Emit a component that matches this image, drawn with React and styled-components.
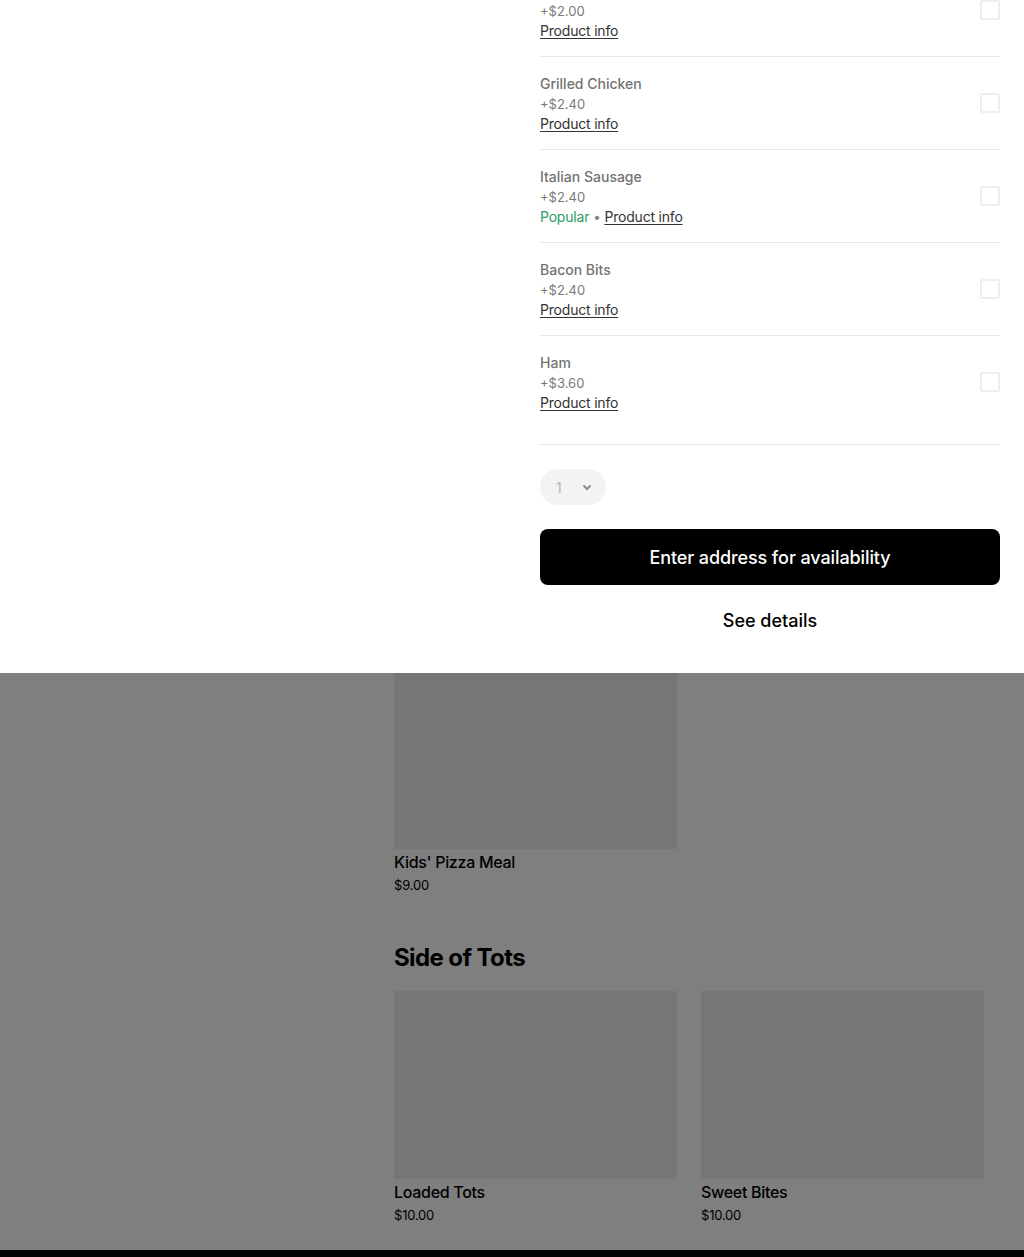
import styled, { createGlobalStyle } from 'styled-components';

const GlobalStyle = createGlobalStyle`
  * { box-sizing: border-box; }
  body {
    margin: 0;
    background: #ffffff;
    font-family: Inter, "Noto Sans", "Liberation Sans", sans-serif;
    color: #000;
  }
`;

const Screen = styled.div`
  height: 1257px;
  overflow: hidden;
  display: flex;
  flex-direction: column;
`;

const Sheet = styled.section`
  background: #fff;
  display: grid;
  grid-template-columns: 516px 460px;
  column-gap: 24px;
  flex-shrink: 0;
`;

const Options = styled.div`
  grid-column: 2;
  margin-top: -36px;
  display: flex;
  flex-direction: column;
`;

const OptionRow = styled.label`
  display: flex;
  align-items: center;
  justify-content: space-between;
  padding: 17px 0 ${(p) => (p.$last ? '31px' : '15px')};
  border-bottom: 1px solid #e8e8e8;
`;

const OptionText = styled.div`
  display: flex;
  flex-direction: column;
`;

const OptionName = styled.span`
  font-size: 14px;
  line-height: 20px;
  font-weight: 500;
  color: #737373;
`;

const OptionPrice = styled.span`
  font-size: 13px;
  line-height: 20px;
  color: #7a7a7a;
`;

const OptionMeta = styled.span`
  font-size: 14px;
  line-height: 20px;
  letter-spacing: -0.2px;
  color: #888;
`;

const Popular = styled.span`
  color: #2f9c60;
`;

const InfoLink = styled.a`
  color: #333;
  text-decoration: underline;
  text-underline-offset: 2px;
  cursor: pointer;
`;

const Checkbox = styled.span`
  width: 20px;
  height: 20px;
  margin-top: -2px;
  border: 2px solid #eeeeee;
  border-radius: 2px;
  flex-shrink: 0;
`;

const Actions = styled.div`
  grid-column: 2;
  display: flex;
  flex-direction: column;
  align-items: stretch;
  padding: 24px 0 29px;
`;

const QtySelect = styled.div`
  align-self: flex-start;
  width: 66px;
  height: 36px;
  border-radius: 18px;
  background: #f3f3f3;
  display: flex;
  align-items: center;
  justify-content: space-between;
  padding: 0 13px 0 16px;
  font-size: 14px;
  color: #b5b5b5;
`;

const PrimaryButton = styled.button`
  margin-top: 24px;
  height: 56px;
  border: none;
  border-radius: 8px;
  background: #000;
  color: #fff;
  font-family: inherit;
  font-size: 18px;
  font-weight: 500;
  letter-spacing: -0.1px;
  cursor: pointer;
`;

const TextButton = styled.button`
  margin-top: 11px;
  height: 48px;
  border: none;
  background: none;
  color: #000;
  font-family: inherit;
  font-size: 18px;
  font-weight: 500;
  cursor: pointer;
`;

const Backdrop = styled.section`
  position: relative;
  height: 577px;
  overflow: hidden;
  background: #fff;
  flex-shrink: 0;

  &::after {
    content: '';
    position: absolute;
    inset: 0;
    background: rgba(0, 0, 0, 0.5);
  }
`;

const Menu = styled.div`
  margin-top: -12px;
  padding-left: 394px;
  display: flex;
  flex-direction: column;
`;

const SectionTitle = styled.h2`
  margin: 46px 0 17px;
  font-size: 24px;
  line-height: 32px;
  font-weight: 700;
  letter-spacing: -0.6px;
`;

const CardGrid = styled.div`
  display: grid;
  grid-template-columns: repeat(2, 283px);
  column-gap: 24px;
`;

const Card = styled.div`
  display: flex;
  flex-direction: column;
`;

const CardImage = styled.div`
  height: 188px;
  background: #ececec;
`;

const CardTitle = styled.div`
  padding-top: 1px;
  font-size: 16px;
  line-height: 24px;
  font-weight: 500;
  letter-spacing: -0.3px;
`;

const CardPrice = styled.div`
  font-size: 13px;
  line-height: 22px;
  letter-spacing: -0.2px;
`;

const BottomBar = styled.div`
  height: 7px;
  background: #000;
  flex-shrink: 0;
`;

const Chevron = () => (
  <svg width="12" height="12" viewBox="0 0 12 12" fill="none">
    <path d="M2.5 4.5L6 8l3.5-3.5" stroke="#8a8a8a" strokeWidth="2" />
  </svg>
);

const options = [
  { name: 'Mushrooms', price: '+$2.00' },
  { name: 'Grilled Chicken', price: '+$2.40' },
  { name: 'Italian Sausage', price: '+$2.40', popular: true },
  { name: 'Bacon Bits', price: '+$2.40' },
  { name: 'Ham', price: '+$3.60' },
];

const sections = [
  { title: null, items: [{ name: "Kids' Pizza Meal", price: '$9.00' }] },
  {
    title: 'Side of Tots',
    items: [
      { name: 'Loaded Tots', price: '$10.00' },
      { name: 'Sweet Bites', price: '$10.00' },
    ],
  },
];

const App = () => (
  <>
    <GlobalStyle />
    <Screen>
      <Sheet>
        <Options>
          {options.map((o, i) => (
            <OptionRow key={o.name} $last={i === options.length - 1}>
              <OptionText>
                <OptionName>{o.name}</OptionName>
                <OptionPrice>{o.price}</OptionPrice>
                <OptionMeta>
                  {o.popular && (
                    <>
                      <Popular>Popular</Popular> •{' '}
                    </>
                  )}
                  <InfoLink>Product info</InfoLink>
                </OptionMeta>
              </OptionText>
              <Checkbox />
            </OptionRow>
          ))}
        </Options>
        <Actions>
          <QtySelect>
            <span>1</span>
            <Chevron />
          </QtySelect>
          <PrimaryButton>Enter address for availability</PrimaryButton>
          <TextButton>See details</TextButton>
        </Actions>
      </Sheet>
      <Backdrop>
        <Menu>
          {sections.map((s, i) => (
            <div key={i}>
              {s.title && <SectionTitle>{s.title}</SectionTitle>}
              <CardGrid>
                {s.items.map((it) => (
                  <Card key={it.name}>
                    <CardImage />
                    <CardTitle>{it.name}</CardTitle>
                    <CardPrice>{it.price}</CardPrice>
                  </Card>
                ))}
              </CardGrid>
            </div>
          ))}
        </Menu>
      </Backdrop>
      <BottomBar />
    </Screen>
  </>
);

export default App;
